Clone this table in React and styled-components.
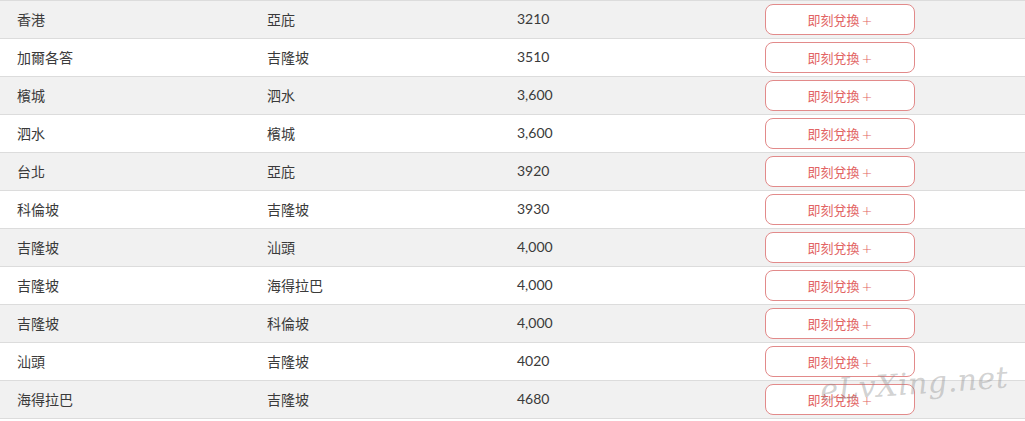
import React from "react";
import styled, { createGlobalStyle } from "styled-components";

const Global = createGlobalStyle`
  html, body { margin: 0; padding: 0; background: #fff; }
  body { font-family: Lato, "Noto Sans CJK TC", sans-serif; color: #333; }
`;

const Wrap = styled.div`
  position: relative;
  width: 1025px;
  height: 421px;
  overflow: hidden;
  background: #fff;
`;

const Table = styled.div`
  display: flex;
  flex-direction: column;
  border-bottom: 1px solid #dcdcdc;
`;

const Row = styled.div`
  display: grid;
  grid-template-columns: 250px 250px 248px 1fr;
  height: 37px;
  align-items: center;
  border-top: 1px solid #dcdcdc;
  background: ${(p) => (p.$shade ? "#f1f1f1" : "#fff")};
`;

const Cell = styled.div`
  padding-left: 17px;
  font-size: 14px;
  font-family: ${(p) => (p.$num ? 'Lato, "Noto Sans CJK TC", sans-serif' : '"Noto Sans CJK TC", sans-serif')};
  color: #3a3a3a;
  line-height: 1;
  margin-top: -2px;
`;

const BtnCell = styled.div`
  padding-left: 17px;
  display: flex;
  align-items: center;
`;

const Button = styled.button`
  width: 150px;
  height: 31px;
  box-sizing: border-box;
  border: 1px solid #e28a8a;
  border-radius: 8px;
  background: #fff;
  color: #e26464;
  font-family: "Noto Sans CJK TC", sans-serif;
  font-weight: 400;
  font-size: 13px;
  padding: 0;
  margin-top: -1px;
  cursor: pointer;
`;

const Plus = styled.span`
  margin-left: 2px;
  font-family: "DejaVu Sans", sans-serif;
  font-weight: 300;
`;

const Watermark = styled.div`
  position: absolute;
  left: 820px;
  top: 366px;
  font-family: "DejaVu Serif", serif;
  font-style: italic;
  font-size: 30px;
  letter-spacing: 0.5px;
  color: rgba(140, 140, 140, 0.4);
  transform: rotate(-4deg);
  pointer-events: none;
`;

const rows = [
  ["香港", "亞庇", "3210"],
  ["加爾各答", "吉隆坡", "3510"],
  ["檳城", "泗水", "3,600"],
  ["泗水", "檳城", "3,600"],
  ["台北", "亞庇", "3920"],
  ["科倫坡", "吉隆坡", "3930"],
  ["吉隆坡", "汕頭", "4,000"],
  ["吉隆坡", "海得拉巴", "4,000"],
  ["吉隆坡", "科倫坡", "4,000"],
  ["汕頭", "吉隆坡", "4020"],
  ["海得拉巴", "吉隆坡", "4680"],
];

export default function App() {
  return (
    <Wrap>
      <Global />
      <Table>
        {rows.map((r, i) => (
          <Row key={i} $shade={i % 2 === 0}>
            <Cell>{r[0]}</Cell>
            <Cell>{r[1]}</Cell>
            <Cell $num>{r[2]}</Cell>
            <BtnCell>
              <Button>
                即刻兌換<Plus>+</Plus>
              </Button>
            </BtnCell>
          </Row>
        ))}
      </Table>
      <Watermark>eLvXing.net</Watermark>
    </Wrap>
  );
}
